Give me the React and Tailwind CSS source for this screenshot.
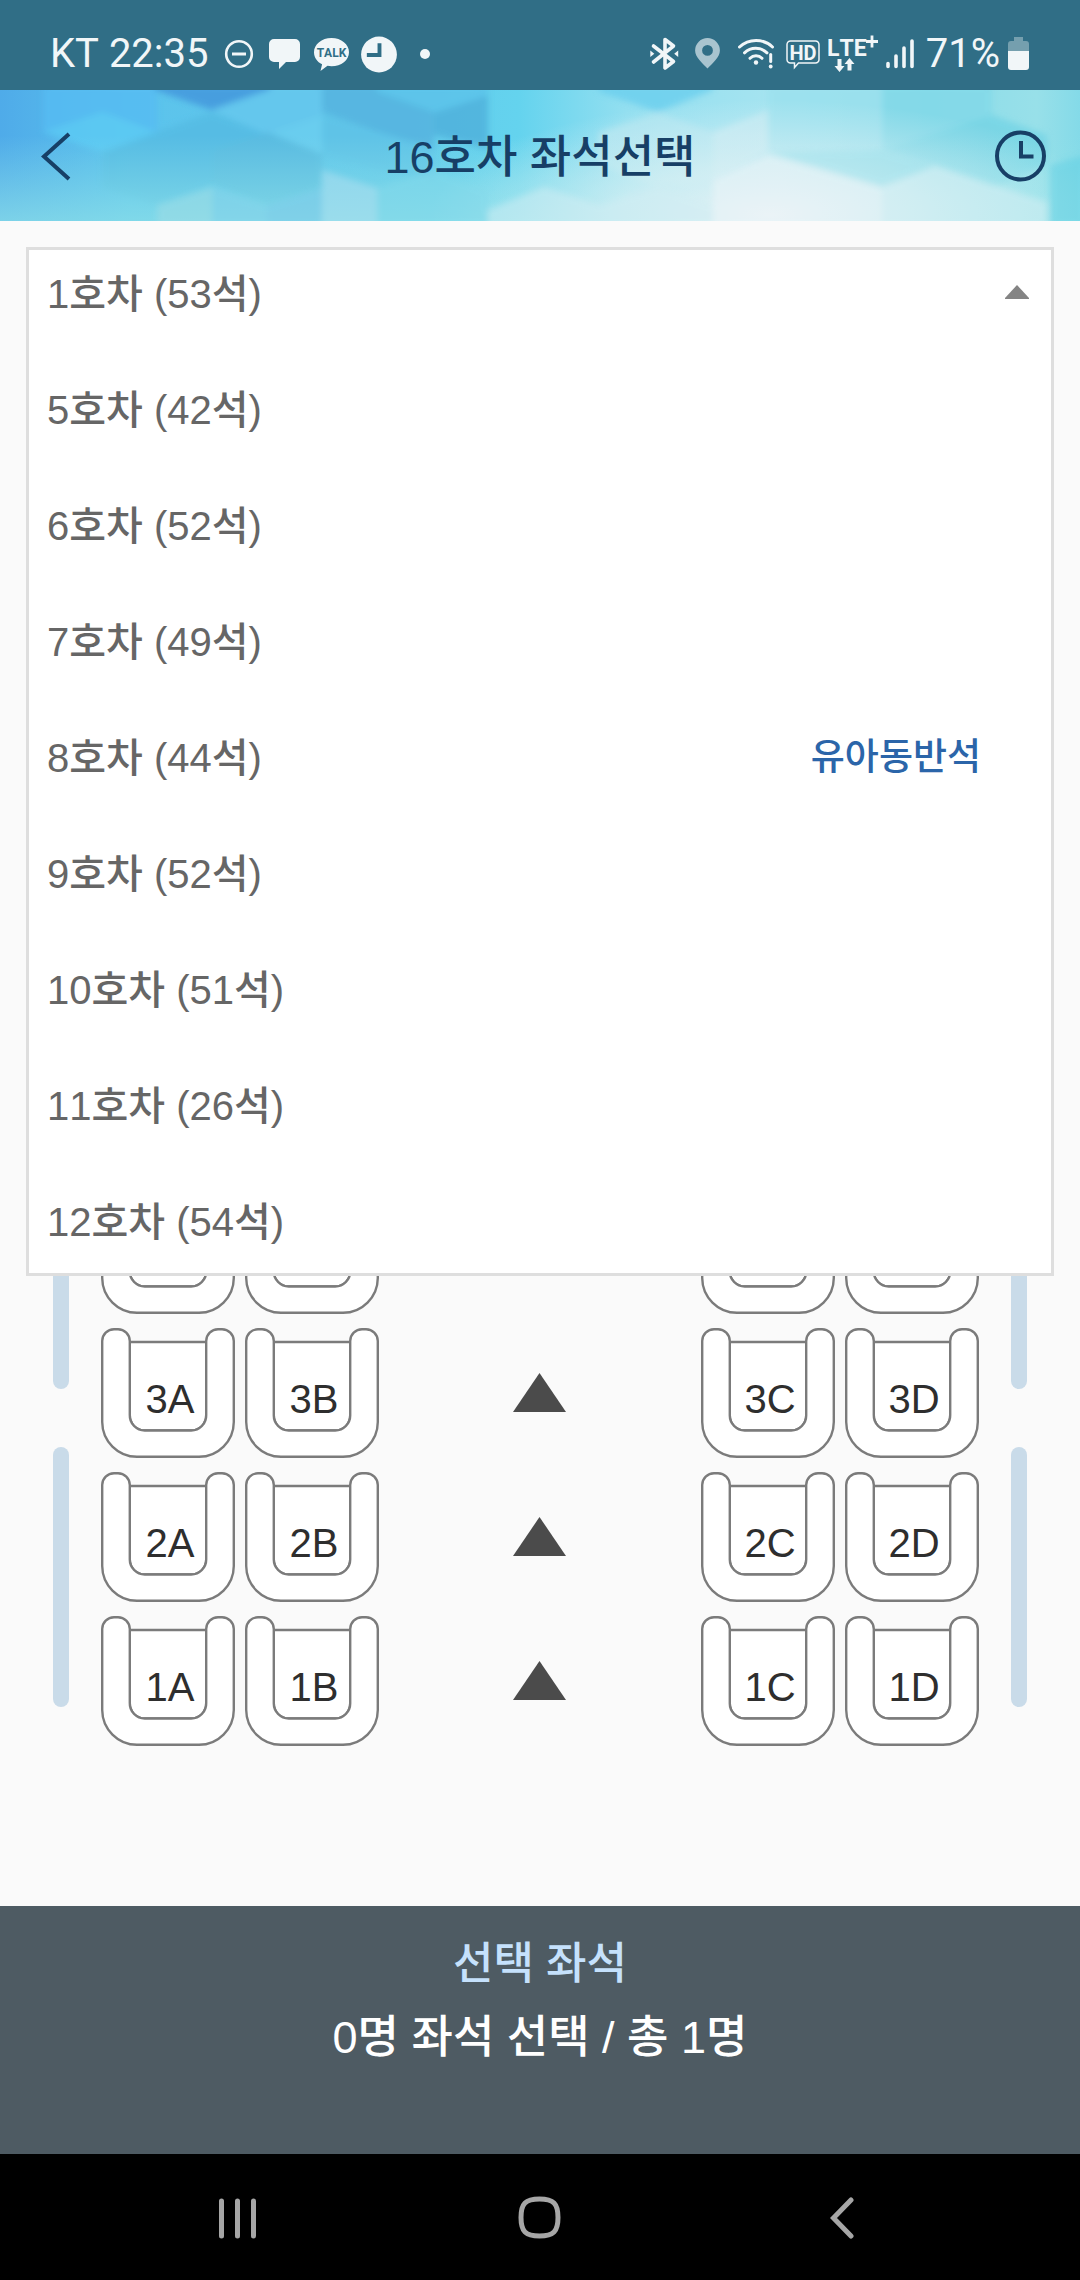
import React, { useState } from "react";

const CARS = [
  { no: 1, seats: 53 },
  { no: 5, seats: 42 },
  { no: 6, seats: 52 },
  { no: 7, seats: 49 },
  { no: 8, seats: 44, note: "유아동반석" },
  { no: 9, seats: 52 },
  { no: 10, seats: 51 },
  { no: 11, seats: 26 },
  { no: 12, seats: 54 },
];

const ROWS = [4, 3, 2, 1];

// ------------------------------------------
// STATUS BAR
// ------------------------------------------
function StatusBar() {
  return (
    <div className="flex h-[90px] items-center justify-between bg-[#306e86] pt-[18px] pr-[51px] pl-[50px] font-[Roboto,sans-serif] text-[40px] leading-none text-[#f1f6f8]">
      <div className="flex items-center gap-3">
        <span className="whitespace-nowrap">KT 22:35</span>

        {/* Do not disturb */}
        <svg className="h-10 w-9" viewBox="221 34 36 40" fill="none" stroke="currentColor">
          <circle cx="239" cy="54" r="12.8" strokeWidth="2.6" />
          <path d="M232 54h14" strokeWidth="3" />
        </svg>

        {/* Message */}
        <svg className="h-10 w-[31px]" viewBox="270 34 31 40" fill="currentColor">
          <path d="M275 39h21a5 5 0 0 1 5 5v13a5 5 0 0 1-5 5h-9l-7 7v-7h-5a5 5 0 0 1-5-5V44a5 5 0 0 1 5-5Z" />
        </svg>

        {/* Talk */}
        <svg className="h-10 w-[37px]" viewBox="313 34 37 40" fill="currentColor">
          <path d="M332.500 38c9.800 0 17.500 6.300 17.500 14.200s-7.700 14-17.500 14c-1.300 0-2.700-.1-4-.4l-7 5.200 1.600-6.700c-5-2.400-8.100-7-8.100-12.100 0-7.900 7.700-14.200 17.500-14.200Z" />
          <text x="332.500" y="56.500" textAnchor="middle" className="fill-[#306e86] font-[Roboto,sans-serif] text-[12px] font-bold">
            TALK
          </text>
        </svg>

        {/* Clock */}
        <svg className="h-10 w-9" viewBox="361 34 37 40" fill="none">
          <circle cx="379.500" cy="54.500" r="18.400" fill="currentColor" />
          <path d="M380 43v12h-13" stroke="#306e86" strokeWidth="4" />
        </svg>

        <svg className="h-10 w-8" viewBox="410 34 32 40" fill="currentColor">
          <circle cx="426" cy="54" r="5" />
        </svg>
      </div>

      <div className="flex items-center gap-2">
        {/* Bluetooth */}
        <svg className="h-10 w-9" viewBox="646 34 36 40" fill="none" stroke="currentColor" strokeWidth="3.600" strokeLinecap="round" strokeLinejoin="round">
          <path d="M653.500 46 673.500 61.500 665 68V39.500L673.500 46 653.500 62" />
          <path d="M650.300 50.500v6.500l4-3.200zM678.200 50.500v6.500l-4-3.200z" fill="currentColor" stroke="none" />
        </svg>

        {/* Location */}
        <svg className="h-10 w-[34px]" viewBox="690 34 34 40">
          <path fillRule="evenodd" fill="#a9c4cf" d="M707.500 38a12.400 12.400 0 0 1 12.400 12.400c0 7-7.400 12.600-12.400 18-5-5.400-12.400-11-12.400-18A12.400 12.400 0 0 1 707.500 38Zm0 7a5.400 5.400 0 1 0 0 10.800 5.400 5.400 0 0 0 0-10.800Z" />
        </svg>

        {/* Wifi */}
        <svg className="h-10 w-11" viewBox="732 34 44 40" fill="none" stroke="currentColor" strokeWidth="3" strokeLinecap="round">
          <path d="M739.500 47a24 24 0 0 1 33 0M744.500 52.800a16.500 16.500 0 0 1 22.500 0M750 58.300a8.500 8.500 0 0 1 12 0" />
          <circle cx="756" cy="62.500" r="2.200" fill="currentColor" stroke="none" />
          <path d="M770.700 54.500v7" />
          <circle cx="770.700" cy="66.500" r="1.900" fill="currentColor" stroke="none" />
        </svg>

        {/* HD voice */}
        <svg className="h-10 w-9" viewBox="784 34 36 40" fill="none">
          <path d="M790.500 41h25a3.500 3.500 0 0 1 3.500 3.500v15a3.500 3.500 0 0 1-3.500 3.500h-17l-4 4.500V63h-4a3.500 3.500 0 0 1-3.500-3.500v-15a3.500 3.500 0 0 1 3.500-3.500Z" stroke="currentColor" strokeWidth="1.500" />
          <text x="803" y="59.500" textAnchor="middle" fill="currentColor" className="text-[20px] font-bold">
            HD
          </text>
        </svg>

        {/* LTE+ */}
        <svg className="h-10 w-[50px]" viewBox="828 34 50 40" fill="none">
          <text x="827" y="56" fill="currentColor" className="text-[23px] font-bold">
            LTE
          </text>
          <path d="M866 41.500h12M872 35.500v12" stroke="currentColor" strokeWidth="2.800" />
          <path d="M837.500 59h4v7h3l-5 6-5-6h3zM847.500 70.500h4V64h3l-5-6-5 6h3z" fill="currentColor" />
        </svg>

        {/* Signal */}
        <svg className="h-10 w-8" viewBox="886 34 32 40" fill="none" stroke="currentColor" strokeWidth="3.600" strokeLinecap="round">
          <path d="M888 63.500v3M896 56v10.500M904 48v18.500M912 41v25.500" />
        </svg>

        <span>71%</span>

        {/* Battery */}
        <svg className="h-10 w-[21px]" viewBox="1007 34 21 40">
          <path d="M1013 37h9v4h3a3 3 0 0 1 3 3v7h-21v-7a3 3 0 0 1 3-3h3z" fill="#759fae" />
          <path d="M1007 51h21v16a3 3 0 0 1-3 3h-15a3 3 0 0 1-3-3z" fill="currentColor" />
        </svg>
      </div>
    </div>
  );
}

// ------------------------------------------
// HEADER
// ------------------------------------------
function HeaderPattern() {
  return (
    <svg className="absolute inset-0 h-full w-full" viewBox="0 0 1080 131" preserveAspectRatio="none" aria-hidden="true">
      <defs>
        <linearGradient id="sky" x1="0" x2="1" y1="0" y2="0">
          <stop offset="0" stopColor="#4fabe9" />
          <stop offset="0.120" stopColor="#5bc3ec" />
          <stop offset="0.350" stopColor="#62c8ea" />
          <stop offset="0.480" stopColor="#64d3ee" />
          <stop offset="0.580" stopColor="#93dff0" />
          <stop offset="0.720" stopColor="#a6e4f0" />
          <stop offset="0.860" stopColor="#8bdce9" />
          <stop offset="0.960" stopColor="#98e0e9" />
          <stop offset="1" stopColor="#84dae8" />
        </linearGradient>
        <linearGradient id="foam" x1="0" x2="0" y1="0" y2="1">
          <stop offset="0.350" stopColor="#8fe2e8" stopOpacity="0" />
          <stop offset="1" stopColor="#8fe2e8" stopOpacity="0.700" />
        </linearGradient>
        <radialGradient id="shine" gradientUnits="userSpaceOnUse" cx="0" cy="0" r="1" gradientTransform="translate(770 125) scale(340 115)">
          <stop offset="0" stopColor="#f0f4f7" stopOpacity="0.900" />
          <stop offset="0.450" stopColor="#e8f3f6" stopOpacity="0.600" />
          <stop offset="1" stopColor="#e0f2f6" stopOpacity="0" />
        </radialGradient>
        <filter id="soft" x="-5%" y="-5%" width="110%" height="110%">
          <feGaussianBlur stdDeviation="3" />
        </filter>
      </defs>
      <rect width="1080" height="131" fill="url(#sky)" />
      <g filter="url(#soft)" opacity="0.800">
        <path d="M43-5H157V42L102 62 43 42Z" fill="#57bcf3" />
        <path d="M43 42 102 22 157 42 102 62Z" fill="#5ccbf4" />
        <path d="M155-5H270V0L212 20 155 0Z" fill="#4295dc" />
        <path d="M212 20 270 0V-5H322V30L267 44Z" fill="#66c8ee" />
        <path d="M102 62 212 22 267 44 212 62V95L157 115 102 98Z" fill="#55bbe3" />
        <path d="M267 44 322 26V62L267 80Z" fill="#6ccff0" />
        <path d="M212 60 267 42 322 64V98L267 115 212 95Z" fill="#59b9df" />
        <path d="M322-5H377L434 22V60L377 42 322 22Z" fill="#54b2df" />
        <path d="M377-5H488V5L434 22 377 2Z" fill="#5bc3ea" />
        <path d="M434 22 488 5V60L434 45Z" fill="#50b0db" />
        <path d="M322 24 377 42 434 60V90L377 80 322 66Z" fill="#5fc3e7" />
        <path d="M599-5H713V0L658 22 599 2Z" fill="#6acfee" />
        <path d="M599 42 658 22 713 42V90L658 97 599 75Z" fill="#b0e5f0" />
        <path d="M713 42 768 20V62L713 90Z" fill="#c2e9f2" />
        <path d="M768-5H882V60L825 75 768 60Z" fill="#9be1ee" />
        <path d="M882-5H992V26L940 44 882 60Z" fill="#82d9e8" />
        <path d="M882 60 992 25 1047 45V75L992 98 935 76Z" fill="#74d4e5" />
      </g>
      <rect width="1080" height="131" fill="url(#foam)" />
      <rect width="1080" height="131" fill="url(#shine)" />
      <g filter="url(#soft)" opacity="0.500">
        <path d="M882 60 935 76 882 96 768 62Z" fill="#a2e2ec" />
        <path d="M157 115 212 97V136H157Z" fill="#a2dde4" />
        <path d="M212 97 267 115V136H212Z" fill="#86d2e9" />
        <path d="M267 115 322 98V136H267Z" fill="#7fc9e8" />
        <path d="M322 80 377 98V136H322Z" fill="#b4e0f0" />
        <path d="M377 98 434 80 488 100V136H377Z" fill="#84d9ea" />
        <path d="M488 120 544 97 599 115 658 97 713 115V136H488Z" fill="#d2edf3" />
        <path d="M768 65 882 98V136H713V90Z" fill="#eef4f8" />
        <path d="M882 98 935 76 1047 112V136H882Z" fill="#daf0f4" />
        <path d="M1050 75 1085 65V136H1050Z" fill="#5fcfe3" />
      </g>
    </svg>
  );
}

function Header() {
  return (
    <header className="relative h-[131px] overflow-hidden text-[#173f66]">
      <HeaderPattern />
      <div className="relative flex h-full items-center justify-between px-[34px]">
        <button type="button" aria-label="뒤로">
          <svg className="h-[52px] w-[52px]" viewBox="0 0 52 52" fill="none" stroke="currentColor" strokeWidth="4">
            <path d="M35 4 10 26.500 35 49" />
          </svg>
        </button>
        <h1 className="pt-1 text-[45px] leading-none font-medium">16호차 좌석선택</h1>
        <button type="button" aria-label="시간">
          <svg className="h-[52px] w-[52px]" viewBox="0 0 52 52" fill="none" stroke="currentColor" strokeWidth="4">
            <circle cx="26.500" cy="26" r="23.500" />
            <path d="M27 11v15.500h12.500" />
          </svg>
        </button>
      </div>
    </header>
  );
}

// ------------------------------------------
// CAR LIST
// ------------------------------------------
function CarList({ onPick }) {
  return (
    <ul className="absolute inset-x-[26px] top-[26px] z-10 flex flex-col gap-11 border-3 border-[#dedede] bg-white pt-2 pb-[15px] text-[40px] leading-[72px] font-medium text-[#666]">
      {CARS.map((car, i) => (
        <li key={car.no}>
          <button
            type="button"
            onClick={() => onPick(car.no)}
            className="flex w-full items-center justify-between pr-[22px] pl-[18px]"
          >
            <span>
              {car.no}호차 ({car.seats}석)
            </span>
            {car.note && <span className="pr-12 text-[37px] text-[#2b65a9]">{car.note}</span>}
            {i === 0 && (
              <svg className="h-[18px] w-6" viewBox="0 0 24 18" fill="#848484">
                <path d="M12 0 24 13v1H0v-1Z" />
              </svg>
            )}
          </button>
        </li>
      ))}
    </ul>
  );
}

// ------------------------------------------
// SEAT MAP
// ------------------------------------------
function Seat({ label, covered, selected, onToggle }) {
  return (
    <button
      type="button"
      aria-label={label}
      aria-pressed={selected}
      onClick={() => onToggle(label)}
      className="relative block h-[130px] w-[134px] text-[40px] leading-none text-[#2e2e2e]"
    >
      <svg
        className="absolute inset-0"
        width="134"
        height="130"
        viewBox="0 0 134 130"
        fill={selected ? "#c9dbe9" : "#fff"}
        stroke="#7b7b7b"
        strokeWidth="2.400"
      >
        {/* cushion, then the armrests and back */}
        <path d="M28.800 14H105.200V87A15 15 0 0 1 90 102.500H44A15 15 0 0 1 28.800 87Z" />
        <path d="M1.200 13A12 12 0 0 1 13 1.200H17A12 12 0 0 1 28.800 13V87A15 15 0 0 0 44 102.500H90A15 15 0 0 0 105.200 87V13A12 12 0 0 1 117 1.200H121A12 12 0 0 1 132.800 13V94A35 35 0 0 1 98 128.800H36A35 35 0 0 1 1.200 94Z" />
      </svg>
      {!covered && <span className="relative block pt-3 pl-1">{label}</span>}
    </button>
  );
}

function SeatBlock({ letters, listOpen, picked, onToggle }) {
  return (
    <div className="grid grid-cols-2 gap-x-[10px] gap-y-[14px]">
      {ROWS.map((row) =>
        letters.map((letter) => (
          <Seat
            key={row + letter}
            label={row + letter}
            covered={listOpen && row === 4}
            selected={picked.includes(row + letter)}
            onToggle={onToggle}
          />
        ))
      )}
    </div>
  );
}

function Windows() {
  return (
    <div className="flex flex-col justify-end gap-[58px] pb-[39px]">
      <div className="h-[260px] w-4 rounded-full bg-[#c9dbe9]" />
      <div className="h-[260px] w-4 rounded-full bg-[#c9dbe9]" />
    </div>
  );
}

function Aisle() {
  return (
    <div className="flex flex-col gap-[14px]">
      {ROWS.map((row) => (
        <div key={row} className="flex h-[130px] items-center">
          <svg className="h-10 w-[54px]" viewBox="0 0 54 40" fill="#4b4b4b">
            <path d="M26.500 0 53 39H0Z" />
          </svg>
        </div>
      ))}
    </div>
  );
}

export default function App() {
  const [picked, setPicked] = useState([]);
  const [open, setOpen] = useState(true);

  const toggle = (label) => {
    setPicked((prev) => (prev.includes(label) ? [] : [label]));
  };

  return (
    <div className="flex min-h-screen flex-col bg-[#fafafa] font-[Liberation_Sans,Noto_Sans_CJK_KR,sans-serif] [font-kerning:none]">
      <StatusBar />
      <Header />

      <main className="relative flex flex-1 flex-col justify-end pb-40">
        {open && <CarList onPick={() => setOpen(false)} />}
        <div className="flex items-end justify-between px-[53px]">
          <div className="flex items-end gap-8">
            <Windows />
            <SeatBlock letters={["A", "B"]} listOpen={open} picked={picked} onToggle={toggle} />
          </div>
          <Aisle />
          <div className="flex items-end gap-8">
            <SeatBlock letters={["C", "D"]} listOpen={open} picked={picked} onToggle={toggle} />
            <Windows />
          </div>
        </div>
      </main>

      {/* Selection summary */}
      <footer className="h-[248px] bg-[#4e5b63] pt-[21px] text-center leading-[74px] font-medium">
        <h2 className="text-[44px] text-[#c5e1fc]">선택 좌석</h2>
        <p className="text-[45px] text-white">{picked.length}명 좌석 선택 / 총 1명</p>
      </footer>

      {/* System navigation */}
      <nav className="flex h-[126px] items-center justify-between bg-black px-[212px] text-[#a6a6a6]">
        <button type="button" aria-label="최근 앱">
          <svg className="h-[44px] w-[52px]" viewBox="0 0 52 44" fill="none" stroke="currentColor" strokeWidth="5" strokeLinecap="round">
            <path d="M9.500 6v35M25.500 6v35M41.500 6v35" />
          </svg>
        </button>
        <button type="button" aria-label="홈">
          <svg className="h-[44px] w-[52px]" viewBox="0 0 52 44" fill="none" stroke="currentColor" strokeWidth="5">
            <path d="M25.500 4c14 0 18.500 4.500 18.500 18.500S39.500 41 25.500 41 7 36.500 7 22.500 11.500 4 25.500 4Z" />
          </svg>
        </button>
        <button type="button" aria-label="이전">
          <svg className="h-[44px] w-[52px]" viewBox="0 0 52 44" fill="none" stroke="currentColor" strokeWidth="5" strokeLinecap="round">
            <path d="M35 5 17.500 23 35 41" />
          </svg>
        </button>
      </nav>
    </div>
  );
}
